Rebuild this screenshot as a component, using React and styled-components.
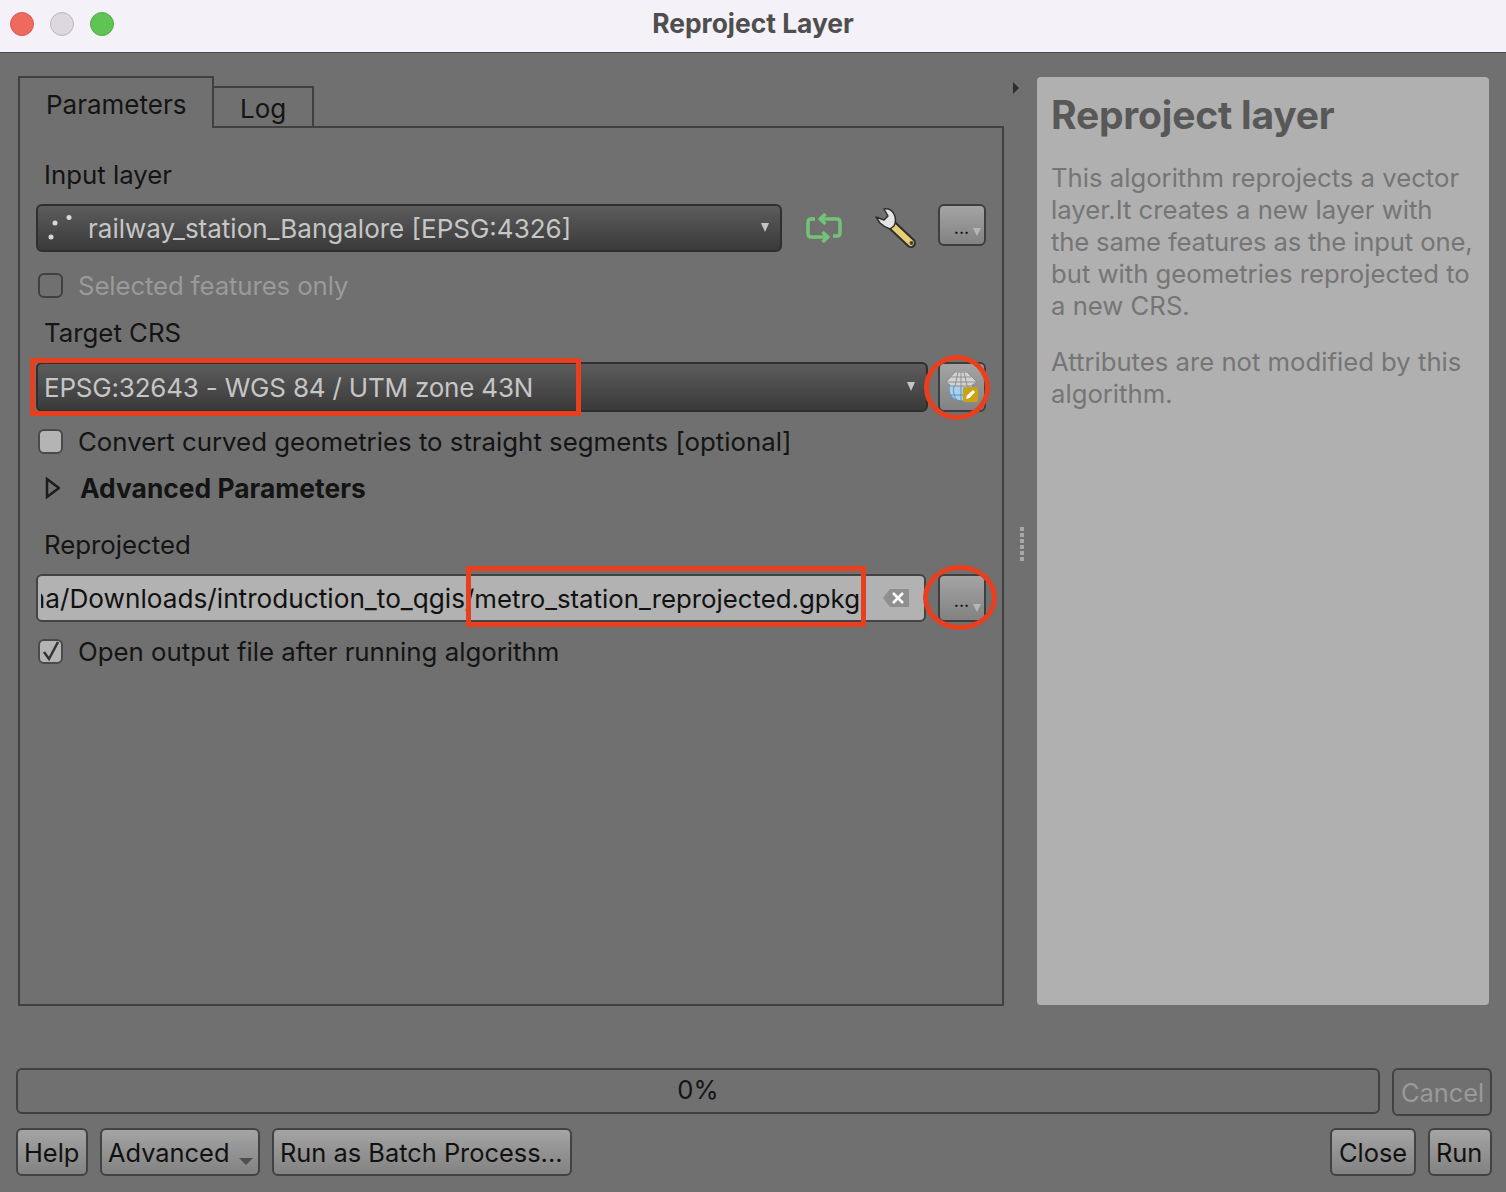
import React from 'react';
import styled, { createGlobalStyle } from 'styled-components';

const GlobalStyle = createGlobalStyle`
  html, body {
    margin: 0;
    padding: 0;
    background: #707070;
  }
  * {
    box-sizing: border-box;
  }
  body {
    font-family: Inter, "Noto Sans", "Liberation Sans", sans-serif;
    color: #111;
  }
`;

const Window = styled.div`
  width: 1506px;
  height: 1192px;
  overflow: hidden;
  background: #707070;
  display: flex;
  flex-direction: column;
`;

const TitleBar = styled.header`
  position: relative;
  height: 53px;
  flex: none;
  display: flex;
  align-items: center;
  justify-content: center;
  background: #f5f1f8;
  border-bottom: 1px solid #4a4a4a;
`;

const Lights = styled.div`
  position: absolute;
  left: 10px;
  top: 12px;
  display: flex;
  gap: 16px;
`;

const Light = styled.span`
  width: 24px;
  height: 24px;
  border-radius: 50%;
  background: ${props => props.$color};
  border: 1px solid ${props => props.$edge};
`;

const Title = styled.h1`
  margin: 0 0 7px;
  font-size: 26.4px;
  font-weight: 650;
  color: #4e4e4e;
`;

const Main = styled.main`
  display: flex;
  height: 953px;
  padding: 23px 17px 0 18px;
  flex: none;
`;

const LeftPanel = styled.section`
  width: 986px;
  display: flex;
  flex-direction: column;
`;

const TabBar = styled.div`
  display: flex;
  align-items: flex-end;
  height: 52px;
  flex: none;
  margin-bottom: -2px;
`;

const Tab = styled.div`
  height: ${props => (props.$active ? 52 : 42)}px;
  width: ${props => (props.$active ? 196 : 102)}px;
  padding: ${props => (props.$active ? '12px 0 0 26px' : '6px 0 0 26px')};
  margin-left: ${props => (props.$active ? 0 : -2)}px;
  border: 2px solid #404040;
  border-bottom: ${props => (props.$active ? 'none' : '2px solid #404040')};
  font-size: 26px;
  line-height: 30px;
  color: #141414;
  position: relative;
  z-index: ${props => (props.$active ? 1 : 0)};
  background: #707070;
`;

const Pane = styled.div`
  flex: 1;
  border: 2px solid #404040;
  padding: 32px 16px 0 16px;
  display: flex;
  flex-direction: column;
`;

const Row = styled.div`
  display: flex;
  align-items: center;
  height: ${props => props.$height || 30}px;
  margin-top: ${props => props.$top || 0}px;
  flex: none;
`;

const FieldLabel = styled.div`
  padding-left: 8px;
  font-size: 25.8px;
  line-height: 30px;
  color: #141414;
`;

const Combo = styled.div`
  position: relative;
  width: ${props => props.$width}px;
  height: 100%;
  display: flex;
  align-items: center;
  flex: none;
  padding-left: ${props => props.$pad}px;
  border: 2px solid #2f2f2f;
  border-radius: 6px;
  background: linear-gradient(#5c5c5c, #3a3a3a);
  color: #c6c6c6;
  font-size: 26px;
  letter-spacing: ${props => props.$spacing || 0}px;
  white-space: nowrap;
`;

const ComboArrow = styled.span`
  position: absolute;
  right: 11px;
  top: 50%;
  margin-top: -5px;
  width: 0;
  height: 0;
  border-left: 4px solid transparent;
  border-right: 4px solid transparent;
  border-top: 9px solid #c4c4c4;
`;

const PointIcon = styled.svg`
  width: 24px;
  height: 26px;
  margin-right: 16px;
  margin-left: -2px;
  flex: none;
`;

const IconSlot = styled.div`
  width: ${props => props.$width}px;
  height: 100%;
  display: flex;
  align-items: center;
  justify-content: center;
  flex: none;
`;

const ToolButton = styled.div`
  position: relative;
  width: 48px;
  height: ${props => props.$height}px;
  margin-left: ${props => props.$left}px;
  align-self: flex-start;
  flex: none;
  display: flex;
  align-items: center;
  justify-content: center;
  border: 2px solid #3e3e3e;
  border-radius: 6px;
  background: linear-gradient(#a4a4a4, #828282);
`;

const Dots = styled.span`
  position: absolute;
  left: 14px;
  bottom: ${props => props.$bottom}px;
  font-size: 14px;
  line-height: 14px;
  font-weight: 700;
  letter-spacing: 0.5px;
  color: #111;
`;

const DotsArrow = styled.span`
  position: absolute;
  right: 3px;
  bottom: ${props => props.$bottom}px;
  width: 0;
  height: 0;
  border-left: 4px solid transparent;
  border-right: 4px solid transparent;
  border-top: 8px solid #b5b5b5;
`;

const CheckRow = styled(Row)`
  padding-left: 2px;
  gap: 15px;
  font-size: 25.8px;
  letter-spacing: ${props => (props.$disabled ? -0.12 : 0)}px;
  color: ${props => (props.$disabled ? '#9a9a9a' : '#141414')};
`;

const Box = styled.span`
  width: 25px;
  height: 25px;
  flex: none;
  display: flex;
  align-items: center;
  justify-content: center;
  border: 2px solid ${props => (props.$disabled ? '#404040' : '#4a4a4a')};
  border-radius: 6px;
  background: ${props => (props.$disabled ? 'transparent' : '#b4b4b4')};
`;

const Group = styled(Row)`
  padding-left: 8px;
  gap: 20px;
  font-size: 26.4px;
  font-weight: 700;
  color: #141414;
`;

const PathField = styled.div`
  position: relative;
  width: 890px;
  height: 100%;
  flex: none;
  display: flex;
  align-items: center;
  border: 2px solid #434343;
  border-radius: 6px;
  background: #b2b2b2;
  padding: 0 64px 0 3px;
  font-size: 25.8px;
  color: #111;
`;

const PathClip = styled.div`
  flex: 1;
  overflow: hidden;
  display: flex;
  justify-content: flex-end;
  white-space: nowrap;
`;

const PathDir = styled.span`
  font-size: 26.2px;
`;

const ClearIcon = styled.svg`
  position: absolute;
  right: 15px;
  top: 12px;
`;

const Splitter = styled.div`
  width: 33px;
  flex: none;
  height: 100%;
  display: flex;
  flex-direction: column;
  align-items: center;
`;

const CollapseArrow = styled.span`
  width: 0;
  height: 0;
  margin: 6px 9px 0 0;
  border-top: 6px solid transparent;
  border-bottom: 6px solid transparent;
  border-left: 6px solid #2e2e2e;
`;

const Grip = styled.div`
  margin-top: 433px;
  margin-left: 3px;
  display: flex;
  flex-direction: column;
  gap: 2px;
`;

const GripDot = styled.span`
  width: 4px;
  height: 4px;
  background: #a6a6a6;
`;

const HelpPanel = styled.aside`
  width: 452px;
  height: 928px;
  margin-top: 1px;
  flex: none;
  padding: 14px 0 0 14px;
  background: #b0b0b0;
  border-radius: 4px;
  color: #757575;
  font-size: 25.7px;
  line-height: 32px;
`;

const HelpTitle = styled.h2`
  margin: 0 0 23px;
  font-size: 39px;
  line-height: 48px;
  font-weight: 700;
  letter-spacing: -0.2px;
  color: #585858;
`;

const HelpText = styled.p`
  margin: 0 0 24px;
`;

const TightLine = styled.span`
  letter-spacing: -0.17px;
`;

const Footer = styled.footer`
  padding: 62px 14px 0 16px;
  display: flex;
  flex-direction: column;
  gap: 12px;
`;

const FooterRow = styled.div`
  display: flex;
  align-items: flex-start;
  height: 48px;
`;

const Progress = styled.div`
  width: 1364px;
  height: 46px;
  padding-bottom: 3px;
  display: flex;
  align-items: center;
  justify-content: center;
  border: 2px solid #404040;
  border-radius: 6px;
  font-size: 25.6px;
  color: #141414;
`;

const Button = styled.div`
  position: relative;
  width: ${props => props.$width}px;
  height: 48px;
  margin-left: ${props => props.$left || 0}px;
  padding-left: ${props => props.$pad || 6}px;
  display: flex;
  align-items: center;
  flex: none;
  white-space: nowrap;
  border: 2px solid #424242;
  border-radius: 6px;
  background: ${props => (props.$disabled ? 'transparent' : 'linear-gradient(#a4a4a4, #828282)')};
  font-size: 25.4px;
  color: ${props => (props.$disabled ? '#9a9a9a' : '#111')};
`;

const MenuArrow = styled.span`
  position: absolute;
  right: 5px;
  bottom: 9px;
  width: 0;
  height: 0;
  border-left: 7px solid transparent;
  border-right: 7px solid transparent;
  border-top: 7px solid #4e4e4e;
`;

const Spacer = styled.div`
  flex: 1;
`;

const MarkRect = styled.span`
  position: absolute;
  left: ${props => props.$left}px;
  top: ${props => props.$top}px;
  width: ${props => props.$width}px;
  height: ${props => props.$height}px;
  border: 5px solid #e8401f;
  pointer-events: none;
  z-index: 2;
`;

const MarkCircle = styled(MarkRect)`
  border-radius: 50%;
`;

const RefreshIcon = () => (
  <svg width="36" height="30" viewBox="0 0 36 30" fill="none" stroke="#74c278" strokeWidth="3.5" strokeLinejoin="round">
    <path d="M14 6H31Q34 6 34 9V20Q34 23 31 23H27" />
    <path d="M19.500 1L14 6L19.500 11" />
    <path d="M22 24H5Q2 24 2 21V9Q2 6 5 6H9" />
    <path d="M16.500 19L22 24L16.500 29" />
  </svg>
);

const WrenchIcon = () => (
  <svg width="42" height="40" viewBox="0 0 42 40">
    <path d="M18 18L36 35" stroke="#2e2e2e" strokeWidth="10" strokeLinecap="round" />
    <path d="M19 19L36 35" stroke="#e9cf72" strokeWidth="6" strokeLinecap="round" />
    <circle cx="36.500" cy="35" r="2" fill="#444" />
    <path d="M1 9L9 12L13 8L9 1Q16 0 19 6Q22 12 19 18L15 21Q9 19 5 15Z" fill="#e4e4e4" stroke="#2e2e2e" strokeWidth="1.500" strokeLinejoin="round" />
  </svg>
);

const GlobeIcon = () => (
  <svg width="32" height="30" viewBox="0 0 32 30">
    <circle cx="15" cy="17" r="12" fill="#a9d0ee" stroke="#5f91bd" strokeWidth="1" />
    <path d="M15 12V29M8 14Q6 22 11 28M22 14Q24 22 19 28M4 23H26" stroke="#5f91bd" strokeWidth="1" fill="none" />
    <path d="M9 0H21L31 10L25 14H5L0 10Z" fill="#d2d2d2" stroke="#808080" strokeWidth="0.800" />
    <path d="M12 0L9 14M18 0L21 14M5 5H25M1 10H30M15 0V14" stroke="#808080" strokeWidth="0.800" fill="none" />
    <rect x="17" y="15" width="15" height="15" rx="1.500" fill="#caa212" />
    <path d="M20 27L21 23.500L27 18L29 20L23.500 26Z" fill="#fff" />
  </svg>
);

const CheckMark = () => (
  <svg width="20" height="22" viewBox="0 0 20 22" fill="none" stroke="#333" strokeWidth="2.500">
    <path d="M3 12L8 19L17 2" />
  </svg>
);

function App() {
  return (
    <Window>
      <GlobalStyle />
      <TitleBar>
        <Lights>
          <Light $color="#ee6a5f" $edge="#d8594f" />
          <Light $color="#dcd8de" $edge="#bdb9bf" />
          <Light $color="#5fc454" $edge="#50ab46" />
        </Lights>
        <Title>Reproject Layer</Title>
      </TitleBar>

      <Main>
        <LeftPanel>
          <TabBar>
            <Tab $active>Parameters</Tab>
            <Tab>Log</Tab>
          </TabBar>
          <Pane>
            <Row>
              <FieldLabel>Input layer</FieldLabel>
            </Row>
            <Row $height={48} $top={14}>
              <Combo $width={746} $pad={12}>
                <PointIcon viewBox="0 0 24 26">
                  <circle cx="7" cy="8" r="2.500" fill="#d8d8d8" />
                  <circle cx="21" cy="2.500" r="2.500" fill="#d8d8d8" />
                  <circle cx="3" cy="22" r="2.500" fill="#d8d8d8" />
                </PointIcon>
                railway_station_Bangalore [EPSG:4326]
                <ComboArrow />
              </Combo>
              <IconSlot $width={84}>
                <RefreshIcon />
              </IconSlot>
              <IconSlot $width={60}>
                <WrenchIcon />
              </IconSlot>
              <ToolButton $height={42} $left={12}>
                <Dots $bottom={8}>...</Dots>
                <DotsArrow $bottom={8} />
              </ToolButton>
            </Row>
            <CheckRow $top={18} $disabled>
              <Box $disabled />
              Selected features only
            </CheckRow>
            <Row $top={18}>
              <FieldLabel>Target CRS</FieldLabel>
            </Row>
            <Row $height={50} $top={14}>
              <Combo $width={892} $pad={6} $spacing={-0.2}>
                EPSG:32643 - WGS 84 / UTM zone 43N
                <ComboArrow />
                <MarkRect $left={-8} $top={-6} $width={551} $height={58} />
              </Combo>
              <ToolButton $height={50} $left={10}>
                <GlobeIcon />
                <MarkCircle $left={-16} $top={-9} $width={66} $height={65} />
              </ToolButton>
            </Row>
            <CheckRow $top={14}>
              <Box />
              Convert curved geometries to straight segments [optional]
            </CheckRow>
            <Group $top={17}>
              <svg width="16" height="22" viewBox="0 0 16 22" fill="none" stroke="#1c1c1c" strokeWidth="2.500">
                <path d="M3 2L15 11L3 20Z" />
              </svg>
              Advanced Parameters
            </Group>
            <Row $top={27}>
              <FieldLabel>Reprojected</FieldLabel>
            </Row>
            <Row $height={48} $top={14}>
              <PathField>
                <PathClip>
                  <PathDir>na/Downloads/introduction_to_qgis</PathDir>
                  /metro_station_reprojected.gpkg
                </PathClip>
                <ClearIcon width="26" height="20" viewBox="0 0 26 20">
                  <path d="M0 10L7 1H26V19H7Z" fill="#8f8f8f" />
                  <path d="M10 5L20 15M20 5L10 15" stroke="#fff" strokeWidth="2.500" />
                </ClearIcon>
                <MarkRect $left={428} $top={-10} $width={400} $height={61} />
              </PathField>
              <ToolButton $height={48} $left={12}>
                <Dots $bottom={11}>...</Dots>
                <DotsArrow $bottom={8} />
                <MarkCircle $left={-17} $top={-11} $width={74} $height={65} />
              </ToolButton>
            </Row>
            <CheckRow $top={14}>
              <Box>
                <CheckMark />
              </Box>
              Open output file after running algorithm
            </CheckRow>
          </Pane>
        </LeftPanel>

        <Splitter>
          <CollapseArrow />
          <Grip>
            <GripDot />
            <GripDot />
            <GripDot />
            <GripDot />
            <GripDot />
            <GripDot />
          </Grip>
        </Splitter>

        <HelpPanel>
          <HelpTitle>Reproject layer</HelpTitle>
          <HelpText>
            This algorithm reprojects a vector<br />
            layer.It creates a new layer with<br />
            <TightLine>the same features as the input one,</TightLine><br />
            but with geometries reprojected to<br />
            a new CRS.
          </HelpText>
          <HelpText>Attributes are not modified by this<br />algorithm.</HelpText>
        </HelpPanel>
      </Main>

      <Footer>
        <FooterRow>
          <Progress>0%</Progress>
          <Button $width={100} $left={12} $pad={7} $disabled>Cancel</Button>
        </FooterRow>
        <FooterRow>
          <Button $width={72}>Help</Button>
          <Button $width={160} $left={12}>
            Advanced
            <MenuArrow />
          </Button>
          <Button $width={300} $left={12}>Run as Batch Process...</Button>
          <Spacer />
          <Button $width={86} $pad={7}>Close</Button>
          <Button $width={64} $left={12}>Run</Button>
        </FooterRow>
      </Footer>
    </Window>
  );
}

export default App;
